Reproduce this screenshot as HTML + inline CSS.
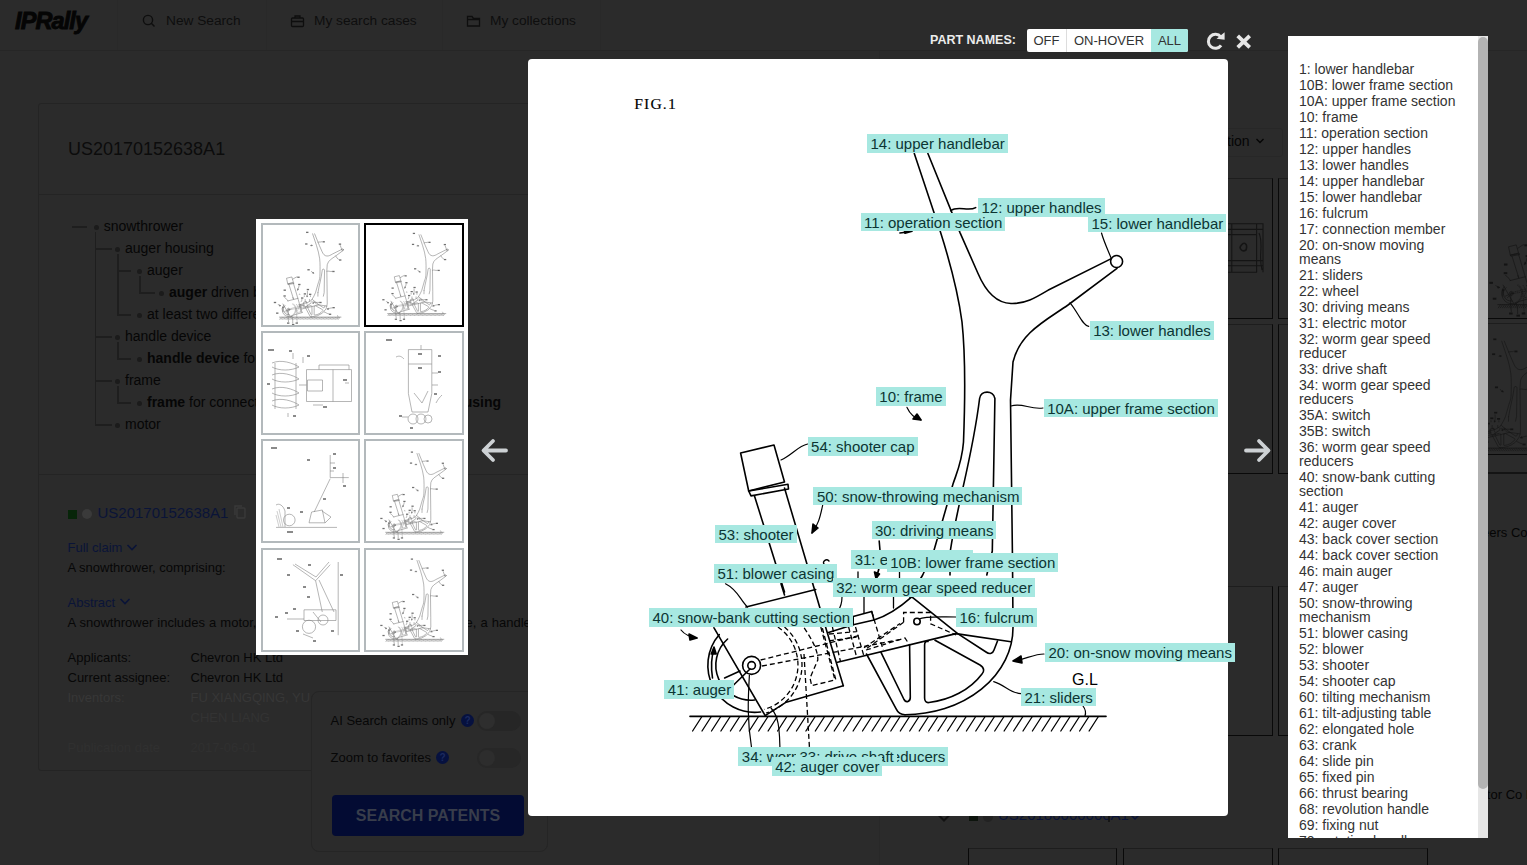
<!DOCTYPE html>
<html><head><meta charset="utf-8">
<style>
*{box-sizing:border-box;margin:0;padding:0}
html,body{width:1527px;height:865px;overflow:hidden;background:#2b2b2b;font-family:"Liberation Sans",sans-serif;position:relative}
.a{position:absolute;white-space:nowrap}
.hdr{left:0;top:0;width:1527px;height:51px;border-bottom:1px solid #262626}
.nav{top:0;height:50px;border-left:1px solid #292929}
.nav span{position:absolute;top:13px;line-height:16px;color:#0e0e0e;font-size:13.7px}
.card{left:38px;top:103px;width:830px;height:668px;border:1px solid #242424;border-radius:3px}
.t{position:absolute;color:#060606;font-size:14px;line-height:16px;white-space:nowrap}
.tl{position:absolute;background:#1e1e1e}
.dot{position:absolute;width:5px;height:5px;border-radius:50%;background:#1b1b1b}
.d13{position:absolute;font-size:13px;line-height:16px;color:#070707;white-space:nowrap}
.navy{color:#0a1438}
.fade{color:#262626}
.modal{left:528px;top:59px;width:700px;height:757px;background:#fff;border-radius:4px;overflow:hidden}
.lb{position:absolute;background:#a7e8e1;color:#0c3533;font-size:15px;line-height:18px;height:18.5px;padding:1px 3px 0 3.5px;white-space:nowrap}
.list{left:1288px;top:36px;width:200px;height:802px;background:#fff;overflow:hidden}
.list .in{position:absolute;left:11px;top:26px;width:168px;font-size:14px;line-height:14px;color:#333;white-space:normal}
.list .in p{margin:0 0 2px 0}
.sb{position:absolute;left:190px;top:0;width:10px;height:802px;background:#e6e6e6}
.sbt{position:absolute;left:0;top:1px;width:10px;height:752px;background:#b3b3b3;border-radius:5px}
.thumbs{left:256px;top:219px;width:212px;height:436px;background:#fff}
.th{position:absolute;width:99.5px;height:104px;border:2px solid #b3b9bc;background:#fff;overflow:hidden}
.th.sel{border-color:#000}
.bth{position:absolute;border:1.5px solid #090909;border-top-color:#1d1d1d}
</style></head><body>
<svg width="0" height="0" style="position:absolute"><defs><g id="fig"><g fill="none" stroke="#000" stroke-width="1.6" stroke-linecap="round" stroke-linejoin="round">
<!-- FIG.1 -->
<!-- frame left outer -->
<path d="M914.3 153.5 L940.3 231.6 C950 262 958 292 962 322 C965 350 965.5 390 963.5 442 C962 462 957 472 953 484 L933.8 551 L922.7 575 L909.7 597"/>
<!-- right handle line / upper arm -->
<path d="M927.9 153.5 L960 232.6 L977.8 273 C985 290 995 303 1011 303.5 C1025 304 1035 298 1048.4 290 L1111.3 258.6"/>
<!-- lower arm -->
<path d="M1117 268.4 L1068 305 C1045 321 1020 333 1013 362 L1010.5 400 L1012.5 560 L1013 627.6 A108 87 0 0 1 905 714.7"/>
<!-- handlebar circle -->
<circle cx="1116.6" cy="261.5" r="6"/>
<!-- slot -->
<path d="M950.3 551 C958 500 972 460 979.6 398.5 C980.5 390 993.5 390 994.9 398.5 L992.3 551 L986.8 575"/>
<path d="M950.3 551 L950 575"/>
<!-- leaders -->
<path d="M950.7 210.7 C958 205 968 212 975.7 207.6"/>
<path d="M1101.5 233 C1104 242 1108 250 1111.3 258.6" stroke-width="1.2"/>
<path d="M1070 302.8 C1078 312 1082 325 1088.7 326.4" stroke-width="1.2"/>
<path d="M1011 406 C1022 402 1030 410 1043 408" stroke-width="1.2"/>
<path d="M907 407.4 C910 414 914 418 921 420" stroke-width="1.2"/>
<path d="M921 420 l-8 -1 l4 -5 z" fill="#000"/>
<path d="M899.8 233 l8 -1" stroke-width="1.3"/><path d="M912 231.3 l-8 -2.8 l1 4.8 z" fill="#000"/>
<!-- shooter cap -->
<path d="M740.6 453 L774 445 L784.5 482 L748.7 491 Z"/>
<path d="M748.7 491 L788 484.3 L788.5 489 L751 495.9 Z"/>
<!-- shooter tube -->
<path d="M754.5 496 L784.5 592"/>
<path d="M784.5 488 L825.4 626.4 L843.3 685.7"/>
<!-- blower casing bottom line -->
<path d="M746 607 L815.7 589.5"/>
<path d="M781 583.8 L784.5 595"/>
<path d="M781 460 C792 455 798 446 807.6 444" stroke-width="1.2"/>
<path d="M822.7 505 C820 518 818 525 812 533" stroke-width="1.2"/>
<path d="M812 533 l1 -9 l5 4 z" fill="#000"/>
<path d="M725.5 583.8 C738 590 740 600 747.5 607" stroke-width="1.2"/>
<path d="M824 564 C822 562 826 558 829 561" stroke-width="1.4"/>
<!-- 40 arrow -->
<path d="M681 630 C685 635 690 637 697 638" stroke-width="1.2"/>
<path d="M697 638 l-8 -4 l1 6 z" fill="#000"/>
<!-- auger housing -->
<path d="M714 627.8 L765.2 715.7 L786.2 702.2 L843.3 685.7"/>
<circle cx="751.6" cy="665.4" r="9"/>
<circle cx="751.6" cy="665.4" r="3.8"/>
<path d="M719.3 634.6 A47 47 0 0 0 760.6 712"/>
<path d="M727.6 639 A35 35 0 0 0 754.6 700"/>
<path d="M712.5 678 C711 668 711 658 714 649.6"/>
<path d="M714 647 l-2.8 7 l5 0 z" fill="#000"/>
<path d="M733.6 685 L750 669"/>
<path d="M724.6 678 L740 671"/>
<path d="M749.4 675 C748 700 747 720 751.6 748" stroke-width="1.2"/>
<path d="M771 708 C778 716 780 725 780 757" stroke-width="1.2"/>
<!-- tube upper & worm box -->
<path d="M853.2 624.7 L853.2 616.6 L871.7 611.4 L874 620"/>
<path d="M827.7 632.8 L853.2 624.7 L874 620 C885 616.5 898 609 911.8 596.8 L957.7 633.6 L986 652 C990 655 993 653 994 650 L997.5 641"/>
<path d="M837.6 662.3 L956 633.6 L1011 641.8"/>
<path d="M864 597 L864 613 M893.5 597 L893.5 608 M858 572 L858 578 M899.5 572 L899.5 578" stroke-width="1.3"/>
<path d="M879.2 541 C881 555 880 568 876.5 577"/><path d="M876 578.5 l-1.5 -6.5 l5 2 z" fill="#000"/>
<path d="M842 597 C842 604 840 608 838 611" stroke-width="1.2"/>
<!-- sled -->
<path d="M866.5 654 L896 708.7 C898 713 901 714.7 905 714.7"/>
<path d="M881 652.4 L904 699.5 C906 703 910.5 702 910.3 697 L909.6 645"/>
<path d="M935 640.3 L980 665 C985 668 984 672 982 674 C970 690 950 700 929 702.5 C926 703 924.6 701 924.6 698 L924.6 645 C924.6 642 926 641 928 641.5"/>

<!-- fulcrum -->
<circle cx="917" cy="621.5" r="3.2"/>
<path d="M919 619 C925 616 940 617 956 617" stroke-width="1.2"/>
<!-- 20 arrow & 21 leader -->
<path d="M1044 654 C1035 654 1028 658 1015 661" stroke-width="1.2"/>
<path d="M1013 661 l8 -5 l1 7 z" fill="#000"/>
<path d="M993.7 681.6 C1005 685 1010 693 1021 693.7" stroke-width="1.2"/>
<path d="M1083 706 C1086 710 1086 713 1085 716" stroke-width="1.2"/>
<!-- ground -->
<path d="M690 716.4 L1106 716.4"/>
<path stroke-width="1.3" d="M701.6 717l-9 14 M711.0 717l-9 14 M720.5 717l-9 14 M729.9 717l-9 14 M739.4 717l-9 14 M748.8 717l-9 14 M758.2 717l-9 14 M767.7 717l-9 14 M777.1 717l-9 14 M786.6 717l-9 14 M796.0 717l-9 14 M805.4 717l-9 14 M814.9 717l-9 14 M824.3 717l-9 14 M833.8 717l-9 14 M843.2 717l-9 14 M852.6 717l-9 14 M862.1 717l-9 14 M871.5 717l-9 14 M881.0 717l-9 14 M890.4 717l-9 14 M899.8 717l-9 14 M909.3 717l-9 14 M918.7 717l-9 14 M928.2 717l-9 14 M937.6 717l-9 14 M947.0 717l-9 14 M956.5 717l-9 14 M965.9 717l-9 14 M975.4 717l-9 14 M984.8 717l-9 14 M994.2 717l-9 14 M1003.7 717l-9 14 M1013.1 717l-9 14 M1022.6 717l-9 14 M1032.0 717l-9 14 M1041.4 717l-9 14 M1050.9 717l-9 14 M1060.3 717l-9 14 M1069.8 717l-9 14 M1079.2 717l-9 14 M1088.6 717l-9 14 M1098.1 717l-9 14"/>
</g>
<g fill="none" stroke="#000" stroke-width="1.3" stroke-dasharray="5 3">
<path d="M784.5 627 A50 50 0 0 1 766 713"/>
<path d="M777.9 627 A46 46 0 0 1 764 709.4"/>
<path d="M760.6 660 L860 635.3"/>
<path d="M762 666 L899.4 639.7"/>
<path d="M804.2 627.8 C812 640 818 650 817.8 660 L810 678 L811.7 685.7 L835.8 679.7 L822.3 627.8"/>
<path d="M804 654 L810 757"/>
<path d="M903.6 622.3 L903.6 612.5 L930.6 612.5 L930.6 623.8 L956 635"/>
<path d="M903.6 622.3 L864.5 650 M866 650 L905 638 L909.6 645 M871.7 611.4 L883.2 650"/>
<path d="M864 647.8 L900 623.5"/>
<path d="M820.8 627 L834.7 679 M832.4 627 L840.5 661.7 M848.6 627 L856.6 657 M855.5 627 L863.6 655 M829 634 L856.6 631.6 M829 640.9 L856.6 637"/>
</g>
<text x="634.3" y="109.4" font-family="Liberation Serif" font-size="15.6" style="letter-spacing:1.15px" fill="#000" stroke="#000" stroke-width="0.15">FIG.1</text>
<text x="1072" y="685" font-family="Liberation Sans" font-size="16" fill="#000" stroke="none">G.L</text>
</g></defs></svg>
<!-- header -->
<div class="a hdr"></div>
<div class="a" style="left:15px;top:7.3px;font-size:23.5px;line-height:28px;font-weight:700;font-style:italic;color:#050505;letter-spacing:-0.9px;-webkit-text-stroke:0.9px #050505">IPRally</div>
<div class="a nav" style="left:117px;width:150px"><span style="left:48px">New Search</span>
<svg style="position:absolute;left:24px;top:14px" width="14" height="14" viewBox="0 0 14 14"><circle cx="6" cy="6" r="4.6" fill="none" stroke="#0e0e0e" stroke-width="1.4"/><path d="M9.3 9.3 L12.5 12.5" stroke="#0e0e0e" stroke-width="1.5"/></svg></div>
<div class="a nav" style="left:266px;width:176px"><span style="left:47px">My search cases</span>
<svg style="position:absolute;left:23px;top:14px" width="15" height="14" viewBox="0 0 15 14"><rect x="1.5" y="4" width="12" height="8.5" rx="1" fill="none" stroke="#0e0e0e" stroke-width="1.3"/><path d="M5 4 V2 H10 V4 M1.5 7.5 H13.5" fill="none" stroke="#0e0e0e" stroke-width="1.3"/></svg></div>
<div class="a nav" style="left:442px;width:159px"><span style="left:47px">My collections</span>
<svg style="position:absolute;left:23px;top:14px" width="15" height="14" viewBox="0 0 15 14"><path d="M1.5 2.5 H6 L7.5 4.5 H13.5 V12 H1.5 Z M1.5 5.5 H13.5" fill="none" stroke="#0e0e0e" stroke-width="1.3"/></svg></div>
<div class="a nav" style="left:600px;width:1px"></div>

<!-- left card -->
<div class="a card"></div>
<div class="a" style="left:39px;top:194px;width:828px;height:1px;background:#242424"></div>
<div class="a" style="left:39px;top:474px;width:828px;height:1px;background:#242424"></div>
<div class="a" style="left:68px;top:139px;font-size:18px;line-height:20px;color:#0c0c0c">US20170152638A1</div>
<div class="t" style="left:103.7px;top:217.85px">snowthrower</div>
<div class="dot" style="left:93.7px;top:224.7px"></div>
<div class="t" style="left:125px;top:239.85px">auger housing</div>
<div class="dot" style="left:115.0px;top:246.7px"></div>
<div class="t" style="left:147px;top:261.85px">auger</div>
<div class="dot" style="left:137.0px;top:268.7px"></div>
<div class="t" style="left:169px;top:283.85px"><b>auger</b> driven by the motor</div>
<div class="dot" style="left:159.0px;top:290.7px"></div>
<div class="t" style="left:147px;top:305.85px">at least two different speeds</div>
<div class="dot" style="left:137.0px;top:312.7px"></div>
<div class="t" style="left:125px;top:327.85px">handle device</div>
<div class="dot" style="left:115.0px;top:334.7px"></div>
<div class="t" style="left:147px;top:349.85px"><b>handle device</b> for operating</div>
<div class="dot" style="left:137.0px;top:356.7px"></div>
<div class="t" style="left:125px;top:371.85px">frame</div>
<div class="dot" style="left:115.0px;top:378.7px"></div>
<div class="t" style="left:147px;top:393.85px"><b>frame</b> for connecting <b>handle device</b> and <b>auger housing</b></div>
<div class="dot" style="left:137.0px;top:400.7px"></div>
<div class="t" style="left:125px;top:415.85px">motor</div>
<div class="dot" style="left:115.0px;top:422.7px"></div>
<div class="tl" style="left:72.2px;top:226.45px;width:15.299999999999997px;height:1.5px"></div>
<div class="tl" style="left:94.75px;top:232px;width:1.5px;height:193.95px"></div>
<div class="tl" style="left:95.5px;top:248.45px;width:16.299999999999997px;height:1.5px"></div>
<div class="tl" style="left:95.5px;top:336.45px;width:16.299999999999997px;height:1.5px"></div>
<div class="tl" style="left:95.5px;top:380.45px;width:16.299999999999997px;height:1.5px"></div>
<div class="tl" style="left:95.5px;top:424.45px;width:16.299999999999997px;height:1.5px"></div>
<div class="tl" style="left:117.25px;top:254px;width:1.5px;height:61.95px"></div>
<div class="tl" style="left:118px;top:270.45px;width:13px;height:1.5px"></div>
<div class="tl" style="left:118px;top:314.45px;width:13px;height:1.5px"></div>
<div class="tl" style="left:139.45px;top:276px;width:1.5px;height:17.95px"></div>
<div class="tl" style="left:140.2px;top:292.45px;width:14.600000000000023px;height:1.5px"></div>
<div class="tl" style="left:117.25px;top:342px;width:1.5px;height:17.95px"></div>
<div class="tl" style="left:118px;top:358.45px;width:13px;height:1.5px"></div>
<div class="tl" style="left:117.25px;top:386px;width:1.5px;height:17.95px"></div>
<div class="tl" style="left:118px;top:402.45px;width:13px;height:1.5px"></div>
<!-- details -->
<div class="a" style="left:67.5px;top:509.5px;width:9px;height:9px;background:#072509"></div>
<div class="a" style="left:82px;top:509px;width:10px;height:10px;border-radius:50%;background:#3a3a3a"></div>
<div class="d13 navy" style="left:97.5px;top:503.5px;font-size:15px;line-height:18px">US20170152638A1</div>
<svg class="a" style="left:232px;top:504px" width="16" height="16" viewBox="0 0 16 16"><rect x="5" y="4" width="8" height="10" rx="1" fill="none" stroke="#3a3a3a" stroke-width="1.4"/><path d="M3 11 V2 H10" fill="none" stroke="#3a3a3a" stroke-width="1.4"/></svg>
<div class="d13 navy" style="left:67.5px;top:540px">Full claim</div>
<svg class="a" style="left:126px;top:543px" width="12" height="9" viewBox="0 0 12 9"><path d="M1.5 2 L6 6.5 L10.5 2" fill="none" stroke="#0a1438" stroke-width="1.6"/></svg>
<div class="d13" style="left:67.5px;top:559.5px">A snowthrower, comprising:</div>
<div class="d13 navy" style="left:67.5px;top:594.5px">Abstract</div>
<svg class="a" style="left:119px;top:597px" width="12" height="9" viewBox="0 0 12 9"><path d="M1.5 2 L6 6.5 L10.5 2" fill="none" stroke="#0a1438" stroke-width="1.6"/></svg>
<div class="d13" style="left:67.5px;top:614.5px;word-spacing:0.45px">A snowthrower includes a motor, an auger housing, an auger, a frame, a handle</div>
<div class="d13" style="left:67.5px;top:650px">Applicants:</div>
<div class="d13" style="left:190.5px;top:650px">Chevron HK Ltd</div>
<div class="d13" style="left:67.5px;top:670px">Current assignee:</div>
<div class="d13" style="left:190.5px;top:670px">Chevron HK Ltd</div>
<div class="d13 fade" style="left:67.5px;top:690px;color:#373737">Inventors:</div>
<div class="d13 fade" style="left:190.5px;top:690px;color:#373737">FU XIANGQING, YU XIANGQING,</div>
<div class="d13 fade" style="left:190.5px;top:709.5px;color:#333">CHEN LIANG</div>
<div class="d13 fade" style="left:67.5px;top:739.5px;color:#303030">Publication date</div>
<div class="d13 fade" style="left:190.5px;top:739.5px;color:#303030">2017-06-01</div>

<!-- search panel -->
<div class="a" style="left:310.5px;top:691px;width:237px;height:161px;border:1px solid #252525;border-radius:8px;background:#2b2b2b"></div>
<div class="d13" style="left:330.5px;top:712.5px">AI Search claims only</div>
<div class="a" style="left:461px;top:714px;width:13px;height:13px;border-radius:50%;background:#06113f;color:#1c2a5e;font-size:10px;line-height:13px;text-align:center;font-weight:700">?</div>
<div class="a" style="left:477px;top:711px;width:44px;height:20px;border-radius:10px;background:#262626"></div>
<div class="a" style="left:479px;top:713px;width:16px;height:16px;border-radius:50%;background:#2e2e2e"></div>
<div class="d13" style="left:330.5px;top:749.5px">Zoom to favorites</div>
<div class="a" style="left:436px;top:751px;width:13px;height:13px;border-radius:50%;background:#06113f;color:#1c2a5e;font-size:10px;line-height:13px;text-align:center;font-weight:700">?</div>
<div class="a" style="left:477px;top:748px;width:44px;height:20px;border-radius:10px;background:#272727"></div>
<div class="a" style="left:479px;top:750px;width:16px;height:16px;border-radius:50%;background:#2d2d2d"></div>
<div class="a" style="left:332px;top:795px;width:192px;height:41px;border-radius:4px;background:#030b33;color:#383d4b;font-size:16px;font-weight:700;line-height:41px;text-align:center">SEARCH PATENTS</div>

<!-- background right side -->
<div class="a" style="left:879px;top:51px;width:1px;height:814px;background:#282828"></div>
<div class="a" style="left:1130px;top:127.5px;width:153px;height:29.5px;border:1px solid #272727;border-radius:3px"></div>
<div class="a" style="left:1150px;top:132.5px;width:99.6px;text-align:right;font-size:14px;line-height:16px;color:#050505">Selection</div>
<svg class="a" style="left:1255px;top:136.5px" width="10" height="8" viewBox="0 0 10 8"><path d="M1.5 2 L5 5.5 L8.5 2" fill="none" stroke="#050505" stroke-width="1.4"/></svg>
<div class="bth" style="left:968px;top:178px;width:149px;height:141px"></div>
<div class="bth" style="left:1123px;top:178px;width:150px;height:141px"></div>
<div class="bth" style="left:1278px;top:178px;width:150px;height:141px"></div>
<div class="bth" style="left:1433px;top:120px;width:150px;height:199px;overflow:hidden;border-top:none"><svg style="position:absolute;left:0;top:0" width="150" height="200"><g transform="translate(-88 27) scale(0.22)" stroke-width="3"><g stroke="#141414" color="#141414"><g fill="none" stroke-linecap="round" stroke-linejoin="round">
<!-- FIG.1 -->
<!-- frame left outer -->
<path d="M914.3 153.5 L940.3 231.6 C950 262 958 292 962 322 C965 350 965.5 390 963.5 442 C962 462 957 472 953 484 L933.8 551 L922.7 575 L909.7 597"/>
<!-- right handle line / upper arm -->
<path d="M927.9 153.5 L960 232.6 L977.8 273 C985 290 995 303 1011 303.5 C1025 304 1035 298 1048.4 290 L1111.3 258.6"/>
<!-- lower arm -->
<path d="M1117 268.4 L1068 305 C1045 321 1020 333 1013 362 L1010.5 400 L1012.5 560 L1013 627.6 A108 87 0 0 1 905 714.7"/>
<!-- handlebar circle -->
<circle cx="1116.6" cy="261.5" r="6"/>
<!-- slot -->
<path d="M950.3 551 C958 500 972 460 979.6 398.5 C980.5 390 993.5 390 994.9 398.5 L992.3 551 L986.8 575"/>
<path d="M950.3 551 L950 575"/>
<!-- leaders -->
<path d="M950.7 210.7 C958 205 968 212 975.7 207.6"/>
<path d="M1101.5 233 C1104 242 1108 250 1111.3 258.6"/>
<path d="M1070 302.8 C1078 312 1082 325 1088.7 326.4"/>
<path d="M1011 406 C1022 402 1030 410 1043 408"/>
<path d="M907 407.4 C910 414 914 418 921 420"/>
<path d="M921 420 l-8 -1 l4 -5 z" fill="currentColor"/>
<path d="M899.8 233 l8 -1"/><path d="M912 231.3 l-8 -2.8 l1 4.8 z" fill="currentColor"/>
<!-- shooter cap -->
<path d="M740.6 453 L774 445 L784.5 482 L748.7 491 Z"/>
<path d="M748.7 491 L788 484.3 L788.5 489 L751 495.9 Z"/>
<!-- shooter tube -->
<path d="M754.5 496 L784.5 592"/>
<path d="M784.5 488 L825.4 626.4 L843.3 685.7"/>
<!-- blower casing bottom line -->
<path d="M746 607 L815.7 589.5"/>
<path d="M781 583.8 L784.5 595"/>
<path d="M781 460 C792 455 798 446 807.6 444"/>
<path d="M822.7 505 C820 518 818 525 812 533"/>
<path d="M812 533 l1 -9 l5 4 z" fill="currentColor"/>
<path d="M725.5 583.8 C738 590 740 600 747.5 607"/>
<path d="M824 564 C822 562 826 558 829 561"/>
<!-- 40 arrow -->
<path d="M681 630 C685 635 690 637 697 638"/>
<path d="M697 638 l-8 -4 l1 6 z" fill="currentColor"/>
<!-- auger housing -->
<path d="M714 627.8 L765.2 715.7 L786.2 702.2 L843.3 685.7"/>
<circle cx="751.6" cy="665.4" r="9"/>
<circle cx="751.6" cy="665.4" r="3.8"/>
<path d="M719.3 634.6 A47 47 0 0 0 760.6 712"/>
<path d="M727.6 639 A35 35 0 0 0 754.6 700"/>
<path d="M712.5 678 C711 668 711 658 714 649.6"/>
<path d="M714 647 l-2.8 7 l5 0 z" fill="currentColor"/>
<path d="M733.6 685 L750 669"/>
<path d="M724.6 678 L740 671"/>
<path d="M749.4 675 C748 700 747 720 751.6 748"/>
<path d="M771 708 C778 716 780 725 780 757"/>
<!-- tube upper & worm box -->
<path d="M853.2 624.7 L853.2 616.6 L871.7 611.4 L874 620"/>
<path d="M827.7 632.8 L853.2 624.7 L874 620 C885 616.5 898 609 911.8 596.8 L957.7 633.6 L986 652 C990 655 993 653 994 650 L997.5 641"/>
<path d="M837.6 662.3 L956 633.6 L1011 641.8"/>
<path d="M864 597 L864 613 M893.5 597 L893.5 608 M858 572 L858 578 M899.5 572 L899.5 578"/>
<path d="M879.2 541 C881 555 880 568 876.5 577"/><path d="M876 578.5 l-1.5 -6.5 l5 2 z" fill="currentColor"/>
<path d="M842 597 C842 604 840 608 838 611"/>
<!-- sled -->
<path d="M866.5 654 L896 708.7 C898 713 901 714.7 905 714.7"/>
<path d="M881 652.4 L904 699.5 C906 703 910.5 702 910.3 697 L909.6 645"/>
<path d="M935 640.3 L980 665 C985 668 984 672 982 674 C970 690 950 700 929 702.5 C926 703 924.6 701 924.6 698 L924.6 645 C924.6 642 926 641 928 641.5"/>

<!-- fulcrum -->
<circle cx="917" cy="621.5" r="3.2"/>
<path d="M919 619 C925 616 940 617 956 617"/>
<!-- 20 arrow & 21 leader -->
<path d="M1044 654 C1035 654 1028 658 1015 661"/>
<path d="M1013 661 l8 -5 l1 7 z" fill="currentColor"/>
<path d="M993.7 681.6 C1005 685 1010 693 1021 693.7"/>
<path d="M1083 706 C1086 710 1086 713 1085 716"/>
<!-- ground -->
<path d="M690 716.4 L1106 716.4"/>
<path d="M701.6 717l-9 14 M711.0 717l-9 14 M720.5 717l-9 14 M729.9 717l-9 14 M739.4 717l-9 14 M748.8 717l-9 14 M758.2 717l-9 14 M767.7 717l-9 14 M777.1 717l-9 14 M786.6 717l-9 14 M796.0 717l-9 14 M805.4 717l-9 14 M814.9 717l-9 14 M824.3 717l-9 14 M833.8 717l-9 14 M843.2 717l-9 14 M852.6 717l-9 14 M862.1 717l-9 14 M871.5 717l-9 14 M881.0 717l-9 14 M890.4 717l-9 14 M899.8 717l-9 14 M909.3 717l-9 14 M918.7 717l-9 14 M928.2 717l-9 14 M937.6 717l-9 14 M947.0 717l-9 14 M956.5 717l-9 14 M965.9 717l-9 14 M975.4 717l-9 14 M984.8 717l-9 14 M994.2 717l-9 14 M1003.7 717l-9 14 M1013.1 717l-9 14 M1022.6 717l-9 14 M1032.0 717l-9 14 M1041.4 717l-9 14 M1050.9 717l-9 14 M1060.3 717l-9 14 M1069.8 717l-9 14 M1079.2 717l-9 14 M1088.6 717l-9 14 M1098.1 717l-9 14"/>
</g>
<g fill="none" stroke-dasharray="5 3">
<path d="M784.5 627 A50 50 0 0 1 766 713"/>
<path d="M777.9 627 A46 46 0 0 1 764 709.4"/>
<path d="M760.6 660 L860 635.3"/>
<path d="M762 666 L899.4 639.7"/>
<path d="M804.2 627.8 C812 640 818 650 817.8 660 L810 678 L811.7 685.7 L835.8 679.7 L822.3 627.8"/>
<path d="M804 654 L810 757"/>
<path d="M903.6 622.3 L903.6 612.5 L930.6 612.5 L930.6 623.8 L956 635"/>
<path d="M903.6 622.3 L864.5 650 M866 650 L905 638 L909.6 645 M871.7 611.4 L883.2 650"/>
<path d="M864 647.8 L900 623.5"/>
<path d="M820.8 627 L834.7 679 M832.4 627 L840.5 661.7 M848.6 627 L856.6 657 M855.5 627 L863.6 655 M829 634 L856.6 631.6 M829 640.9 L856.6 637"/>
</g>
<text display="none" x="634.3" y="109.4" font-family="Liberation Serif" font-size="15.6" style="letter-spacing:1.15px" fill="currentColor">FIG.1</text>
<text display="none" x="1072" y="685" font-family="Liberation Sans" font-size="16" fill="currentColor" stroke="none">G.L</text>
<rect x="870.0" y="139.2" width="16" height="9" stroke="none" fill="currentColor"/><rect x="981.0" y="203.0" width="16" height="9" stroke="none" fill="currentColor"/><rect x="863.6" y="217.7" width="16" height="9" stroke="none" fill="currentColor"/><rect x="1091.0" y="218.8" width="16" height="9" stroke="none" fill="currentColor"/><rect x="1092.7" y="326.0" width="16" height="9" stroke="none" fill="currentColor"/><rect x="878.8" y="392.0" width="16" height="9" stroke="none" fill="currentColor"/><rect x="1046.7" y="403.5" width="16" height="9" stroke="none" fill="currentColor"/><rect x="810.6" y="442.4" width="16" height="9" stroke="none" fill="currentColor"/><rect x="816.4" y="491.5" width="16" height="9" stroke="none" fill="currentColor"/><rect x="718.0" y="529.8" width="16" height="9" stroke="none" fill="currentColor"/><rect x="874.5" y="525.5" width="16" height="9" stroke="none" fill="currentColor"/><rect x="854.2" y="555.0" width="16" height="9" stroke="none" fill="currentColor"/><rect x="889.7" y="558.0" width="16" height="9" stroke="none" fill="currentColor"/><rect x="717.0" y="569.0" width="16" height="9" stroke="none" fill="currentColor"/><rect x="835.7" y="583.0" width="16" height="9" stroke="none" fill="currentColor"/><rect x="652.0" y="613.0" width="16" height="9" stroke="none" fill="currentColor"/><rect x="959.0" y="613.0" width="16" height="9" stroke="none" fill="currentColor"/><rect x="1048.0" y="648.0" width="16" height="9" stroke="none" fill="currentColor"/><rect x="667.3" y="685.0" width="16" height="9" stroke="none" fill="currentColor"/><rect x="1024.0" y="692.6" width="16" height="9" stroke="none" fill="currentColor"/><rect x="741.3" y="752.3" width="16" height="9" stroke="none" fill="currentColor"/><rect x="799.0" y="752.3" width="16" height="9" stroke="none" fill="currentColor"/><rect x="774.7" y="762.0" width="16" height="9" stroke="none" fill="currentColor"/></g></g></svg></div>
<svg class="a" style="left:1228px;top:215px" width="45" height="65" viewBox="1228 215 45 65"><g fill="none" stroke="#141414" stroke-width="1.1"><path d="M1228 223.7 H1263.5 M1228 229.4 H1263.5 M1228 234.6 H1257 M1228 260.6 H1263.5 M1228 265.8 H1263.5 M1228 272.2 H1257 M1231.8 223.7 V272.2 M1256.6 223.7 V272.2 M1263 223.7 V272.2 M1259 233 C1264 245 1258 255 1262 270"/><path d="M1240 247 C1244 240 1248 244 1246 250 C1243 252 1240 250 1240 247" stroke-width="1.6"/></g></svg>
<div class="bth" style="left:968px;top:324px;width:149px;height:150px"></div>
<div class="bth" style="left:1123px;top:324px;width:150px;height:150px"></div>
<div class="bth" style="left:1278px;top:324px;width:150px;height:150px"></div>
<div class="bth" style="left:1433px;top:323px;width:150px;height:132px;overflow:hidden"><svg style="position:absolute;left:0;top:0" width="150" height="140"><g transform="translate(-106 -12) scale(0.19)" stroke-width="3"><g stroke="#141414" color="#141414"><g fill="none" stroke-linecap="round" stroke-linejoin="round">
<!-- FIG.1 -->
<!-- frame left outer -->
<path d="M914.3 153.5 L940.3 231.6 C950 262 958 292 962 322 C965 350 965.5 390 963.5 442 C962 462 957 472 953 484 L933.8 551 L922.7 575 L909.7 597"/>
<!-- right handle line / upper arm -->
<path d="M927.9 153.5 L960 232.6 L977.8 273 C985 290 995 303 1011 303.5 C1025 304 1035 298 1048.4 290 L1111.3 258.6"/>
<!-- lower arm -->
<path d="M1117 268.4 L1068 305 C1045 321 1020 333 1013 362 L1010.5 400 L1012.5 560 L1013 627.6 A108 87 0 0 1 905 714.7"/>
<!-- handlebar circle -->
<circle cx="1116.6" cy="261.5" r="6"/>
<!-- slot -->
<path d="M950.3 551 C958 500 972 460 979.6 398.5 C980.5 390 993.5 390 994.9 398.5 L992.3 551 L986.8 575"/>
<path d="M950.3 551 L950 575"/>
<!-- leaders -->
<path d="M950.7 210.7 C958 205 968 212 975.7 207.6"/>
<path d="M1101.5 233 C1104 242 1108 250 1111.3 258.6"/>
<path d="M1070 302.8 C1078 312 1082 325 1088.7 326.4"/>
<path d="M1011 406 C1022 402 1030 410 1043 408"/>
<path d="M907 407.4 C910 414 914 418 921 420"/>
<path d="M921 420 l-8 -1 l4 -5 z" fill="currentColor"/>
<path d="M899.8 233 l8 -1"/><path d="M912 231.3 l-8 -2.8 l1 4.8 z" fill="currentColor"/>
<!-- shooter cap -->
<path d="M740.6 453 L774 445 L784.5 482 L748.7 491 Z"/>
<path d="M748.7 491 L788 484.3 L788.5 489 L751 495.9 Z"/>
<!-- shooter tube -->
<path d="M754.5 496 L784.5 592"/>
<path d="M784.5 488 L825.4 626.4 L843.3 685.7"/>
<!-- blower casing bottom line -->
<path d="M746 607 L815.7 589.5"/>
<path d="M781 583.8 L784.5 595"/>
<path d="M781 460 C792 455 798 446 807.6 444"/>
<path d="M822.7 505 C820 518 818 525 812 533"/>
<path d="M812 533 l1 -9 l5 4 z" fill="currentColor"/>
<path d="M725.5 583.8 C738 590 740 600 747.5 607"/>
<path d="M824 564 C822 562 826 558 829 561"/>
<!-- 40 arrow -->
<path d="M681 630 C685 635 690 637 697 638"/>
<path d="M697 638 l-8 -4 l1 6 z" fill="currentColor"/>
<!-- auger housing -->
<path d="M714 627.8 L765.2 715.7 L786.2 702.2 L843.3 685.7"/>
<circle cx="751.6" cy="665.4" r="9"/>
<circle cx="751.6" cy="665.4" r="3.8"/>
<path d="M719.3 634.6 A47 47 0 0 0 760.6 712"/>
<path d="M727.6 639 A35 35 0 0 0 754.6 700"/>
<path d="M712.5 678 C711 668 711 658 714 649.6"/>
<path d="M714 647 l-2.8 7 l5 0 z" fill="currentColor"/>
<path d="M733.6 685 L750 669"/>
<path d="M724.6 678 L740 671"/>
<path d="M749.4 675 C748 700 747 720 751.6 748"/>
<path d="M771 708 C778 716 780 725 780 757"/>
<!-- tube upper & worm box -->
<path d="M853.2 624.7 L853.2 616.6 L871.7 611.4 L874 620"/>
<path d="M827.7 632.8 L853.2 624.7 L874 620 C885 616.5 898 609 911.8 596.8 L957.7 633.6 L986 652 C990 655 993 653 994 650 L997.5 641"/>
<path d="M837.6 662.3 L956 633.6 L1011 641.8"/>
<path d="M864 597 L864 613 M893.5 597 L893.5 608 M858 572 L858 578 M899.5 572 L899.5 578"/>
<path d="M879.2 541 C881 555 880 568 876.5 577"/><path d="M876 578.5 l-1.5 -6.5 l5 2 z" fill="currentColor"/>
<path d="M842 597 C842 604 840 608 838 611"/>
<!-- sled -->
<path d="M866.5 654 L896 708.7 C898 713 901 714.7 905 714.7"/>
<path d="M881 652.4 L904 699.5 C906 703 910.5 702 910.3 697 L909.6 645"/>
<path d="M935 640.3 L980 665 C985 668 984 672 982 674 C970 690 950 700 929 702.5 C926 703 924.6 701 924.6 698 L924.6 645 C924.6 642 926 641 928 641.5"/>

<!-- fulcrum -->
<circle cx="917" cy="621.5" r="3.2"/>
<path d="M919 619 C925 616 940 617 956 617"/>
<!-- 20 arrow & 21 leader -->
<path d="M1044 654 C1035 654 1028 658 1015 661"/>
<path d="M1013 661 l8 -5 l1 7 z" fill="currentColor"/>
<path d="M993.7 681.6 C1005 685 1010 693 1021 693.7"/>
<path d="M1083 706 C1086 710 1086 713 1085 716"/>
<!-- ground -->
<path d="M690 716.4 L1106 716.4"/>
<path d="M701.6 717l-9 14 M711.0 717l-9 14 M720.5 717l-9 14 M729.9 717l-9 14 M739.4 717l-9 14 M748.8 717l-9 14 M758.2 717l-9 14 M767.7 717l-9 14 M777.1 717l-9 14 M786.6 717l-9 14 M796.0 717l-9 14 M805.4 717l-9 14 M814.9 717l-9 14 M824.3 717l-9 14 M833.8 717l-9 14 M843.2 717l-9 14 M852.6 717l-9 14 M862.1 717l-9 14 M871.5 717l-9 14 M881.0 717l-9 14 M890.4 717l-9 14 M899.8 717l-9 14 M909.3 717l-9 14 M918.7 717l-9 14 M928.2 717l-9 14 M937.6 717l-9 14 M947.0 717l-9 14 M956.5 717l-9 14 M965.9 717l-9 14 M975.4 717l-9 14 M984.8 717l-9 14 M994.2 717l-9 14 M1003.7 717l-9 14 M1013.1 717l-9 14 M1022.6 717l-9 14 M1032.0 717l-9 14 M1041.4 717l-9 14 M1050.9 717l-9 14 M1060.3 717l-9 14 M1069.8 717l-9 14 M1079.2 717l-9 14 M1088.6 717l-9 14 M1098.1 717l-9 14"/>
</g>
<g fill="none" stroke-dasharray="5 3">
<path d="M784.5 627 A50 50 0 0 1 766 713"/>
<path d="M777.9 627 A46 46 0 0 1 764 709.4"/>
<path d="M760.6 660 L860 635.3"/>
<path d="M762 666 L899.4 639.7"/>
<path d="M804.2 627.8 C812 640 818 650 817.8 660 L810 678 L811.7 685.7 L835.8 679.7 L822.3 627.8"/>
<path d="M804 654 L810 757"/>
<path d="M903.6 622.3 L903.6 612.5 L930.6 612.5 L930.6 623.8 L956 635"/>
<path d="M903.6 622.3 L864.5 650 M866 650 L905 638 L909.6 645 M871.7 611.4 L883.2 650"/>
<path d="M864 647.8 L900 623.5"/>
<path d="M820.8 627 L834.7 679 M832.4 627 L840.5 661.7 M848.6 627 L856.6 657 M855.5 627 L863.6 655 M829 634 L856.6 631.6 M829 640.9 L856.6 637"/>
</g>
<text display="none" x="634.3" y="109.4" font-family="Liberation Serif" font-size="15.6" style="letter-spacing:1.15px" fill="currentColor">FIG.1</text>
<text display="none" x="1072" y="685" font-family="Liberation Sans" font-size="16" fill="currentColor" stroke="none">G.L</text>
<rect x="870.0" y="139.2" width="16" height="9" stroke="none" fill="currentColor"/><rect x="981.0" y="203.0" width="16" height="9" stroke="none" fill="currentColor"/><rect x="863.6" y="217.7" width="16" height="9" stroke="none" fill="currentColor"/><rect x="1091.0" y="218.8" width="16" height="9" stroke="none" fill="currentColor"/><rect x="1092.7" y="326.0" width="16" height="9" stroke="none" fill="currentColor"/><rect x="878.8" y="392.0" width="16" height="9" stroke="none" fill="currentColor"/><rect x="1046.7" y="403.5" width="16" height="9" stroke="none" fill="currentColor"/><rect x="810.6" y="442.4" width="16" height="9" stroke="none" fill="currentColor"/><rect x="816.4" y="491.5" width="16" height="9" stroke="none" fill="currentColor"/><rect x="718.0" y="529.8" width="16" height="9" stroke="none" fill="currentColor"/><rect x="874.5" y="525.5" width="16" height="9" stroke="none" fill="currentColor"/><rect x="854.2" y="555.0" width="16" height="9" stroke="none" fill="currentColor"/><rect x="889.7" y="558.0" width="16" height="9" stroke="none" fill="currentColor"/><rect x="717.0" y="569.0" width="16" height="9" stroke="none" fill="currentColor"/><rect x="835.7" y="583.0" width="16" height="9" stroke="none" fill="currentColor"/><rect x="652.0" y="613.0" width="16" height="9" stroke="none" fill="currentColor"/><rect x="959.0" y="613.0" width="16" height="9" stroke="none" fill="currentColor"/><rect x="1048.0" y="648.0" width="16" height="9" stroke="none" fill="currentColor"/><rect x="667.3" y="685.0" width="16" height="9" stroke="none" fill="currentColor"/><rect x="1024.0" y="692.6" width="16" height="9" stroke="none" fill="currentColor"/><rect x="741.3" y="752.3" width="16" height="9" stroke="none" fill="currentColor"/><rect x="799.0" y="752.3" width="16" height="9" stroke="none" fill="currentColor"/><rect x="774.7" y="762.0" width="16" height="9" stroke="none" fill="currentColor"/></g></g></svg></div><div class="a" style="left:1433px;top:472px;width:94px;height:1.5px;background:#141414"></div>
<div class="a" style="left:1448.8px;top:524.5px;font-size:13px;line-height:16px;color:#050505">Engineers Co Ltd</div>
<div class="bth" style="left:968px;top:586px;width:149px;height:150px"></div>
<div class="bth" style="left:1123px;top:586px;width:150px;height:150px"></div>
<div class="bth" style="left:1278px;top:586px;width:150px;height:150px"></div>
<div class="a" style="left:1468.8px;top:786.5px;font-size:13px;line-height:16px;color:#050505">Motor Co Ltd</div>
<div class="bth" style="left:968px;top:848px;width:149px;height:50px"></div>
<div class="bth" style="left:1123px;top:848px;width:150px;height:50px"></div>
<div class="bth" style="left:1278px;top:848px;width:150px;height:50px"></div>
<div class="a" style="left:968.5px;top:812px;width:9px;height:9px;background:#0d140d"></div>
<div class="a" style="left:983px;top:811.5px;width:10px;height:10px;border-radius:50%;background:#222"></div>
<div class="a" style="left:998px;top:806px;font-size:15px;line-height:18px;color:#0a1438">US20180000000A1</div><svg class="a" style="left:936px;top:810px" width="16" height="14" viewBox="0 0 16 14"><path d="M1.5 4 L8 10.5 L14.5 4" fill="none" stroke="#121212" stroke-width="2"/></svg><div class="a" style="left:1108px;top:810px;width:1.5px;height:12px;background:#151515"></div><svg class="a" style="left:1128px;top:812px" width="14" height="10" viewBox="0 0 14 10"><path d="M2 2 L7 7 L12 2" fill="none" stroke="#0a1438" stroke-width="1.5"/></svg>

<!-- thumbs -->
<div class="a thumbs"></div>
<div class="th" style="left:260.6px;top:223.3px"><svg style="position:absolute;left:0;top:0" width="96" height="100"><g transform="translate(-85.7 -13.9) scale(0.148)" stroke-width="3.6"><g stroke="#707070" color="#707070"><g fill="none" stroke-linecap="round" stroke-linejoin="round">
<!-- FIG.1 -->
<!-- frame left outer -->
<path d="M914.3 153.5 L940.3 231.6 C950 262 958 292 962 322 C965 350 965.5 390 963.5 442 C962 462 957 472 953 484 L933.8 551 L922.7 575 L909.7 597"/>
<!-- right handle line / upper arm -->
<path d="M927.9 153.5 L960 232.6 L977.8 273 C985 290 995 303 1011 303.5 C1025 304 1035 298 1048.4 290 L1111.3 258.6"/>
<!-- lower arm -->
<path d="M1117 268.4 L1068 305 C1045 321 1020 333 1013 362 L1010.5 400 L1012.5 560 L1013 627.6 A108 87 0 0 1 905 714.7"/>
<!-- handlebar circle -->
<circle cx="1116.6" cy="261.5" r="6"/>
<!-- slot -->
<path d="M950.3 551 C958 500 972 460 979.6 398.5 C980.5 390 993.5 390 994.9 398.5 L992.3 551 L986.8 575"/>
<path d="M950.3 551 L950 575"/>
<!-- leaders -->
<path d="M950.7 210.7 C958 205 968 212 975.7 207.6"/>
<path d="M1101.5 233 C1104 242 1108 250 1111.3 258.6"/>
<path d="M1070 302.8 C1078 312 1082 325 1088.7 326.4"/>
<path d="M1011 406 C1022 402 1030 410 1043 408"/>
<path d="M907 407.4 C910 414 914 418 921 420"/>
<path d="M921 420 l-8 -1 l4 -5 z" fill="currentColor"/>
<path d="M899.8 233 l8 -1"/><path d="M912 231.3 l-8 -2.8 l1 4.8 z" fill="currentColor"/>
<!-- shooter cap -->
<path d="M740.6 453 L774 445 L784.5 482 L748.7 491 Z"/>
<path d="M748.7 491 L788 484.3 L788.5 489 L751 495.9 Z"/>
<!-- shooter tube -->
<path d="M754.5 496 L784.5 592"/>
<path d="M784.5 488 L825.4 626.4 L843.3 685.7"/>
<!-- blower casing bottom line -->
<path d="M746 607 L815.7 589.5"/>
<path d="M781 583.8 L784.5 595"/>
<path d="M781 460 C792 455 798 446 807.6 444"/>
<path d="M822.7 505 C820 518 818 525 812 533"/>
<path d="M812 533 l1 -9 l5 4 z" fill="currentColor"/>
<path d="M725.5 583.8 C738 590 740 600 747.5 607"/>
<path d="M824 564 C822 562 826 558 829 561"/>
<!-- 40 arrow -->
<path d="M681 630 C685 635 690 637 697 638"/>
<path d="M697 638 l-8 -4 l1 6 z" fill="currentColor"/>
<!-- auger housing -->
<path d="M714 627.8 L765.2 715.7 L786.2 702.2 L843.3 685.7"/>
<circle cx="751.6" cy="665.4" r="9"/>
<circle cx="751.6" cy="665.4" r="3.8"/>
<path d="M719.3 634.6 A47 47 0 0 0 760.6 712"/>
<path d="M727.6 639 A35 35 0 0 0 754.6 700"/>
<path d="M712.5 678 C711 668 711 658 714 649.6"/>
<path d="M714 647 l-2.8 7 l5 0 z" fill="currentColor"/>
<path d="M733.6 685 L750 669"/>
<path d="M724.6 678 L740 671"/>
<path d="M749.4 675 C748 700 747 720 751.6 748"/>
<path d="M771 708 C778 716 780 725 780 757"/>
<!-- tube upper & worm box -->
<path d="M853.2 624.7 L853.2 616.6 L871.7 611.4 L874 620"/>
<path d="M827.7 632.8 L853.2 624.7 L874 620 C885 616.5 898 609 911.8 596.8 L957.7 633.6 L986 652 C990 655 993 653 994 650 L997.5 641"/>
<path d="M837.6 662.3 L956 633.6 L1011 641.8"/>
<path d="M864 597 L864 613 M893.5 597 L893.5 608 M858 572 L858 578 M899.5 572 L899.5 578"/>
<path d="M879.2 541 C881 555 880 568 876.5 577"/><path d="M876 578.5 l-1.5 -6.5 l5 2 z" fill="currentColor"/>
<path d="M842 597 C842 604 840 608 838 611"/>
<!-- sled -->
<path d="M866.5 654 L896 708.7 C898 713 901 714.7 905 714.7"/>
<path d="M881 652.4 L904 699.5 C906 703 910.5 702 910.3 697 L909.6 645"/>
<path d="M935 640.3 L980 665 C985 668 984 672 982 674 C970 690 950 700 929 702.5 C926 703 924.6 701 924.6 698 L924.6 645 C924.6 642 926 641 928 641.5"/>

<!-- fulcrum -->
<circle cx="917" cy="621.5" r="3.2"/>
<path d="M919 619 C925 616 940 617 956 617"/>
<!-- 20 arrow & 21 leader -->
<path d="M1044 654 C1035 654 1028 658 1015 661"/>
<path d="M1013 661 l8 -5 l1 7 z" fill="currentColor"/>
<path d="M993.7 681.6 C1005 685 1010 693 1021 693.7"/>
<path d="M1083 706 C1086 710 1086 713 1085 716"/>
<!-- ground -->
<path d="M690 716.4 L1106 716.4"/>
<path d="M701.6 717l-9 14 M711.0 717l-9 14 M720.5 717l-9 14 M729.9 717l-9 14 M739.4 717l-9 14 M748.8 717l-9 14 M758.2 717l-9 14 M767.7 717l-9 14 M777.1 717l-9 14 M786.6 717l-9 14 M796.0 717l-9 14 M805.4 717l-9 14 M814.9 717l-9 14 M824.3 717l-9 14 M833.8 717l-9 14 M843.2 717l-9 14 M852.6 717l-9 14 M862.1 717l-9 14 M871.5 717l-9 14 M881.0 717l-9 14 M890.4 717l-9 14 M899.8 717l-9 14 M909.3 717l-9 14 M918.7 717l-9 14 M928.2 717l-9 14 M937.6 717l-9 14 M947.0 717l-9 14 M956.5 717l-9 14 M965.9 717l-9 14 M975.4 717l-9 14 M984.8 717l-9 14 M994.2 717l-9 14 M1003.7 717l-9 14 M1013.1 717l-9 14 M1022.6 717l-9 14 M1032.0 717l-9 14 M1041.4 717l-9 14 M1050.9 717l-9 14 M1060.3 717l-9 14 M1069.8 717l-9 14 M1079.2 717l-9 14 M1088.6 717l-9 14 M1098.1 717l-9 14"/>
</g>
<g fill="none" stroke-dasharray="5 3">
<path d="M784.5 627 A50 50 0 0 1 766 713"/>
<path d="M777.9 627 A46 46 0 0 1 764 709.4"/>
<path d="M760.6 660 L860 635.3"/>
<path d="M762 666 L899.4 639.7"/>
<path d="M804.2 627.8 C812 640 818 650 817.8 660 L810 678 L811.7 685.7 L835.8 679.7 L822.3 627.8"/>
<path d="M804 654 L810 757"/>
<path d="M903.6 622.3 L903.6 612.5 L930.6 612.5 L930.6 623.8 L956 635"/>
<path d="M903.6 622.3 L864.5 650 M866 650 L905 638 L909.6 645 M871.7 611.4 L883.2 650"/>
<path d="M864 647.8 L900 623.5"/>
<path d="M820.8 627 L834.7 679 M832.4 627 L840.5 661.7 M848.6 627 L856.6 657 M855.5 627 L863.6 655 M829 634 L856.6 631.6 M829 640.9 L856.6 637"/>
</g>
<text display="none" x="634.3" y="109.4" font-family="Liberation Serif" font-size="15.6" style="letter-spacing:1.15px" fill="currentColor">FIG.1</text>
<text display="none" x="1072" y="685" font-family="Liberation Sans" font-size="16" fill="currentColor" stroke="none">G.L</text>
<rect x="870.0" y="139.2" width="16" height="9" stroke="none" fill="currentColor"/><rect x="981.0" y="203.0" width="16" height="9" stroke="none" fill="currentColor"/><rect x="863.6" y="217.7" width="16" height="9" stroke="none" fill="currentColor"/><rect x="1091.0" y="218.8" width="16" height="9" stroke="none" fill="currentColor"/><rect x="1092.7" y="326.0" width="16" height="9" stroke="none" fill="currentColor"/><rect x="878.8" y="392.0" width="16" height="9" stroke="none" fill="currentColor"/><rect x="1046.7" y="403.5" width="16" height="9" stroke="none" fill="currentColor"/><rect x="810.6" y="442.4" width="16" height="9" stroke="none" fill="currentColor"/><rect x="816.4" y="491.5" width="16" height="9" stroke="none" fill="currentColor"/><rect x="718.0" y="529.8" width="16" height="9" stroke="none" fill="currentColor"/><rect x="874.5" y="525.5" width="16" height="9" stroke="none" fill="currentColor"/><rect x="854.2" y="555.0" width="16" height="9" stroke="none" fill="currentColor"/><rect x="889.7" y="558.0" width="16" height="9" stroke="none" fill="currentColor"/><rect x="717.0" y="569.0" width="16" height="9" stroke="none" fill="currentColor"/><rect x="835.7" y="583.0" width="16" height="9" stroke="none" fill="currentColor"/><rect x="652.0" y="613.0" width="16" height="9" stroke="none" fill="currentColor"/><rect x="959.0" y="613.0" width="16" height="9" stroke="none" fill="currentColor"/><rect x="1048.0" y="648.0" width="16" height="9" stroke="none" fill="currentColor"/><rect x="667.3" y="685.0" width="16" height="9" stroke="none" fill="currentColor"/><rect x="1024.0" y="692.6" width="16" height="9" stroke="none" fill="currentColor"/><rect x="741.3" y="752.3" width="16" height="9" stroke="none" fill="currentColor"/><rect x="799.0" y="752.3" width="16" height="9" stroke="none" fill="currentColor"/><rect x="774.7" y="762.0" width="16" height="9" stroke="none" fill="currentColor"/></g></g></svg></div>
<div class="th sel" style="left:364.4px;top:223.3px"><svg style="position:absolute;left:0;top:0" width="96" height="100"><g transform="translate(-75 -11.7) scale(0.14)" stroke-width="3.6"><g stroke="#707070" color="#707070"><g fill="none" stroke-linecap="round" stroke-linejoin="round">
<!-- FIG.1 -->
<!-- frame left outer -->
<path d="M914.3 153.5 L940.3 231.6 C950 262 958 292 962 322 C965 350 965.5 390 963.5 442 C962 462 957 472 953 484 L933.8 551 L922.7 575 L909.7 597"/>
<!-- right handle line / upper arm -->
<path d="M927.9 153.5 L960 232.6 L977.8 273 C985 290 995 303 1011 303.5 C1025 304 1035 298 1048.4 290 L1111.3 258.6"/>
<!-- lower arm -->
<path d="M1117 268.4 L1068 305 C1045 321 1020 333 1013 362 L1010.5 400 L1012.5 560 L1013 627.6 A108 87 0 0 1 905 714.7"/>
<!-- handlebar circle -->
<circle cx="1116.6" cy="261.5" r="6"/>
<!-- slot -->
<path d="M950.3 551 C958 500 972 460 979.6 398.5 C980.5 390 993.5 390 994.9 398.5 L992.3 551 L986.8 575"/>
<path d="M950.3 551 L950 575"/>
<!-- leaders -->
<path d="M950.7 210.7 C958 205 968 212 975.7 207.6"/>
<path d="M1101.5 233 C1104 242 1108 250 1111.3 258.6"/>
<path d="M1070 302.8 C1078 312 1082 325 1088.7 326.4"/>
<path d="M1011 406 C1022 402 1030 410 1043 408"/>
<path d="M907 407.4 C910 414 914 418 921 420"/>
<path d="M921 420 l-8 -1 l4 -5 z" fill="currentColor"/>
<path d="M899.8 233 l8 -1"/><path d="M912 231.3 l-8 -2.8 l1 4.8 z" fill="currentColor"/>
<!-- shooter cap -->
<path d="M740.6 453 L774 445 L784.5 482 L748.7 491 Z"/>
<path d="M748.7 491 L788 484.3 L788.5 489 L751 495.9 Z"/>
<!-- shooter tube -->
<path d="M754.5 496 L784.5 592"/>
<path d="M784.5 488 L825.4 626.4 L843.3 685.7"/>
<!-- blower casing bottom line -->
<path d="M746 607 L815.7 589.5"/>
<path d="M781 583.8 L784.5 595"/>
<path d="M781 460 C792 455 798 446 807.6 444"/>
<path d="M822.7 505 C820 518 818 525 812 533"/>
<path d="M812 533 l1 -9 l5 4 z" fill="currentColor"/>
<path d="M725.5 583.8 C738 590 740 600 747.5 607"/>
<path d="M824 564 C822 562 826 558 829 561"/>
<!-- 40 arrow -->
<path d="M681 630 C685 635 690 637 697 638"/>
<path d="M697 638 l-8 -4 l1 6 z" fill="currentColor"/>
<!-- auger housing -->
<path d="M714 627.8 L765.2 715.7 L786.2 702.2 L843.3 685.7"/>
<circle cx="751.6" cy="665.4" r="9"/>
<circle cx="751.6" cy="665.4" r="3.8"/>
<path d="M719.3 634.6 A47 47 0 0 0 760.6 712"/>
<path d="M727.6 639 A35 35 0 0 0 754.6 700"/>
<path d="M712.5 678 C711 668 711 658 714 649.6"/>
<path d="M714 647 l-2.8 7 l5 0 z" fill="currentColor"/>
<path d="M733.6 685 L750 669"/>
<path d="M724.6 678 L740 671"/>
<path d="M749.4 675 C748 700 747 720 751.6 748"/>
<path d="M771 708 C778 716 780 725 780 757"/>
<!-- tube upper & worm box -->
<path d="M853.2 624.7 L853.2 616.6 L871.7 611.4 L874 620"/>
<path d="M827.7 632.8 L853.2 624.7 L874 620 C885 616.5 898 609 911.8 596.8 L957.7 633.6 L986 652 C990 655 993 653 994 650 L997.5 641"/>
<path d="M837.6 662.3 L956 633.6 L1011 641.8"/>
<path d="M864 597 L864 613 M893.5 597 L893.5 608 M858 572 L858 578 M899.5 572 L899.5 578"/>
<path d="M879.2 541 C881 555 880 568 876.5 577"/><path d="M876 578.5 l-1.5 -6.5 l5 2 z" fill="currentColor"/>
<path d="M842 597 C842 604 840 608 838 611"/>
<!-- sled -->
<path d="M866.5 654 L896 708.7 C898 713 901 714.7 905 714.7"/>
<path d="M881 652.4 L904 699.5 C906 703 910.5 702 910.3 697 L909.6 645"/>
<path d="M935 640.3 L980 665 C985 668 984 672 982 674 C970 690 950 700 929 702.5 C926 703 924.6 701 924.6 698 L924.6 645 C924.6 642 926 641 928 641.5"/>

<!-- fulcrum -->
<circle cx="917" cy="621.5" r="3.2"/>
<path d="M919 619 C925 616 940 617 956 617"/>
<!-- 20 arrow & 21 leader -->
<path d="M1044 654 C1035 654 1028 658 1015 661"/>
<path d="M1013 661 l8 -5 l1 7 z" fill="currentColor"/>
<path d="M993.7 681.6 C1005 685 1010 693 1021 693.7"/>
<path d="M1083 706 C1086 710 1086 713 1085 716"/>
<!-- ground -->
<path d="M690 716.4 L1106 716.4"/>
<path d="M701.6 717l-9 14 M711.0 717l-9 14 M720.5 717l-9 14 M729.9 717l-9 14 M739.4 717l-9 14 M748.8 717l-9 14 M758.2 717l-9 14 M767.7 717l-9 14 M777.1 717l-9 14 M786.6 717l-9 14 M796.0 717l-9 14 M805.4 717l-9 14 M814.9 717l-9 14 M824.3 717l-9 14 M833.8 717l-9 14 M843.2 717l-9 14 M852.6 717l-9 14 M862.1 717l-9 14 M871.5 717l-9 14 M881.0 717l-9 14 M890.4 717l-9 14 M899.8 717l-9 14 M909.3 717l-9 14 M918.7 717l-9 14 M928.2 717l-9 14 M937.6 717l-9 14 M947.0 717l-9 14 M956.5 717l-9 14 M965.9 717l-9 14 M975.4 717l-9 14 M984.8 717l-9 14 M994.2 717l-9 14 M1003.7 717l-9 14 M1013.1 717l-9 14 M1022.6 717l-9 14 M1032.0 717l-9 14 M1041.4 717l-9 14 M1050.9 717l-9 14 M1060.3 717l-9 14 M1069.8 717l-9 14 M1079.2 717l-9 14 M1088.6 717l-9 14 M1098.1 717l-9 14"/>
</g>
<g fill="none" stroke-dasharray="5 3">
<path d="M784.5 627 A50 50 0 0 1 766 713"/>
<path d="M777.9 627 A46 46 0 0 1 764 709.4"/>
<path d="M760.6 660 L860 635.3"/>
<path d="M762 666 L899.4 639.7"/>
<path d="M804.2 627.8 C812 640 818 650 817.8 660 L810 678 L811.7 685.7 L835.8 679.7 L822.3 627.8"/>
<path d="M804 654 L810 757"/>
<path d="M903.6 622.3 L903.6 612.5 L930.6 612.5 L930.6 623.8 L956 635"/>
<path d="M903.6 622.3 L864.5 650 M866 650 L905 638 L909.6 645 M871.7 611.4 L883.2 650"/>
<path d="M864 647.8 L900 623.5"/>
<path d="M820.8 627 L834.7 679 M832.4 627 L840.5 661.7 M848.6 627 L856.6 657 M855.5 627 L863.6 655 M829 634 L856.6 631.6 M829 640.9 L856.6 637"/>
</g>
<text display="none" x="634.3" y="109.4" font-family="Liberation Serif" font-size="15.6" style="letter-spacing:1.15px" fill="currentColor">FIG.1</text>
<text display="none" x="1072" y="685" font-family="Liberation Sans" font-size="16" fill="currentColor" stroke="none">G.L</text>
<rect x="870.0" y="139.2" width="16" height="9" stroke="none" fill="currentColor"/><rect x="981.0" y="203.0" width="16" height="9" stroke="none" fill="currentColor"/><rect x="863.6" y="217.7" width="16" height="9" stroke="none" fill="currentColor"/><rect x="1091.0" y="218.8" width="16" height="9" stroke="none" fill="currentColor"/><rect x="1092.7" y="326.0" width="16" height="9" stroke="none" fill="currentColor"/><rect x="878.8" y="392.0" width="16" height="9" stroke="none" fill="currentColor"/><rect x="1046.7" y="403.5" width="16" height="9" stroke="none" fill="currentColor"/><rect x="810.6" y="442.4" width="16" height="9" stroke="none" fill="currentColor"/><rect x="816.4" y="491.5" width="16" height="9" stroke="none" fill="currentColor"/><rect x="718.0" y="529.8" width="16" height="9" stroke="none" fill="currentColor"/><rect x="874.5" y="525.5" width="16" height="9" stroke="none" fill="currentColor"/><rect x="854.2" y="555.0" width="16" height="9" stroke="none" fill="currentColor"/><rect x="889.7" y="558.0" width="16" height="9" stroke="none" fill="currentColor"/><rect x="717.0" y="569.0" width="16" height="9" stroke="none" fill="currentColor"/><rect x="835.7" y="583.0" width="16" height="9" stroke="none" fill="currentColor"/><rect x="652.0" y="613.0" width="16" height="9" stroke="none" fill="currentColor"/><rect x="959.0" y="613.0" width="16" height="9" stroke="none" fill="currentColor"/><rect x="1048.0" y="648.0" width="16" height="9" stroke="none" fill="currentColor"/><rect x="667.3" y="685.0" width="16" height="9" stroke="none" fill="currentColor"/><rect x="1024.0" y="692.6" width="16" height="9" stroke="none" fill="currentColor"/><rect x="741.3" y="752.3" width="16" height="9" stroke="none" fill="currentColor"/><rect x="799.0" y="752.3" width="16" height="9" stroke="none" fill="currentColor"/><rect x="774.7" y="762.0" width="16" height="9" stroke="none" fill="currentColor"/></g></g></svg></div>
<div class="th" style="left:260.6px;top:331px"><svg style="position:absolute;left:0;top:0" width="96" height="100"><g fill="none" stroke="#858585" stroke-width="0.6"><path d="M9 30 C18 26 30 30 36 34 C28 38 16 38 9 34 M9 42 C18 38 30 42 36 46 C28 50 16 50 9 46 M9 56 C18 52 30 56 36 60 C28 64 16 64 9 60 M9 68 C18 64 30 68 36 72 C28 76 16 76 9 72 M12 30 L12 76 M33 30 L33 76"/><path d="M43.5 36.6 H88.5 V68.5 H43.5 Z M44.5 47 H59.5 V58 H44.5 Z M56 36.6 L56 32 H86 V36.6 M36 52 H43.5 M70 36.6 V68.5"/><path d="M30 20 V26 M40 24 V30 M25 80 V84 M50 72 H60 M82 50 H86"/></g><g fill="#8a8a8a"><rect x="5" y="16" width="6" height="2"/><rect x="26" y="17" width="3" height="2"/><rect x="44" y="22" width="3" height="2"/><rect x="60" y="73" width="4" height="2"/><rect x="30" y="82" width="3" height="2"/><rect x="4" y="50" width="3" height="2"/><rect x="80" y="46" width="4" height="2"/></g></svg></div>
<div class="th" style="left:364.4px;top:331px"><svg style="position:absolute;left:0;top:0" width="96" height="100"><g fill="none" stroke="#858585" stroke-width="0.6"><path d="M42.4 16.6 H65.8 V60.5 L62 79 H46 L42.4 60.5 Z M42.4 31 H65.8 M55 12 V16.6 M48 60 L56 70 L62 58 M30 24 C34 22 36 24 38 26 M70 70 C72 66 74 64 76 62"/><circle cx="47" cy="86" r="5"/><circle cx="55" cy="86" r="5"/><circle cx="62" cy="86" r="4"/><path d="M66 40 H72 M66 52 H72 M36 84 H42"/></g><g fill="#8a8a8a"><rect x="20" y="6" width="6" height="2"/><rect x="52" y="20" width="4" height="2"/><rect x="52" y="34" width="4" height="2"/><rect x="72" y="22" width="3" height="2"/><rect x="72" y="38" width="3" height="2"/><rect x="33" y="82" width="3" height="2"/><rect x="68" y="60" width="3" height="2"/><rect x="44" y="94" width="3" height="2"/></g></svg></div>
<div class="th" style="left:260.6px;top:439.3px"><svg style="position:absolute;left:0;top:0" width="96" height="100"><g fill="none" stroke="#858585" stroke-width="0.6"><path d="M67.2 14 V36.6 H85.8 M67.2 37.7 L51.2 71 M48.6 71 L59.3 69 L62 81.8 L46 81.8 Z M59 70 L68 76 L62 82 M13 86.4 H74 M13 64 C16 62 20 64 22 70 L22 86 M67 22 H72 M67 30 H71 M80 32 V42"/><circle cx="26.3" cy="79" r="5.8"/><path d="M14 70 L18 86 M16 68 L20 86 M13 74 L16 86" stroke-width="0.4"/></g><g fill="#8a8a8a"><rect x="8" y="6" width="6" height="2"/><rect x="70" y="12" width="3" height="2"/><rect x="70" y="26" width="3" height="2"/><rect x="44" y="18" width="3" height="2"/><rect x="80" y="44" width="3" height="2"/><rect x="60" y="57" width="3" height="2"/><rect x="24" y="66" width="3" height="2"/><rect x="37" y="70" width="3" height="2"/><rect x="24" y="90" width="6" height="2"/></g></svg></div>
<div class="th" style="left:364.4px;top:439.3px"><svg style="position:absolute;left:0;top:0" width="96" height="100"><g transform="translate(-77 -9) scale(0.14)" stroke-width="3.6"><g stroke="#707070" color="#707070"><g fill="none" stroke-linecap="round" stroke-linejoin="round">
<!-- FIG.1 -->
<!-- frame left outer -->
<path d="M914.3 153.5 L940.3 231.6 C950 262 958 292 962 322 C965 350 965.5 390 963.5 442 C962 462 957 472 953 484 L933.8 551 L922.7 575 L909.7 597"/>
<!-- right handle line / upper arm -->
<path d="M927.9 153.5 L960 232.6 L977.8 273 C985 290 995 303 1011 303.5 C1025 304 1035 298 1048.4 290 L1111.3 258.6"/>
<!-- lower arm -->
<path d="M1117 268.4 L1068 305 C1045 321 1020 333 1013 362 L1010.5 400 L1012.5 560 L1013 627.6 A108 87 0 0 1 905 714.7"/>
<!-- handlebar circle -->
<circle cx="1116.6" cy="261.5" r="6"/>
<!-- slot -->
<path d="M950.3 551 C958 500 972 460 979.6 398.5 C980.5 390 993.5 390 994.9 398.5 L992.3 551 L986.8 575"/>
<path d="M950.3 551 L950 575"/>
<!-- leaders -->
<path d="M950.7 210.7 C958 205 968 212 975.7 207.6"/>
<path d="M1101.5 233 C1104 242 1108 250 1111.3 258.6"/>
<path d="M1070 302.8 C1078 312 1082 325 1088.7 326.4"/>
<path d="M1011 406 C1022 402 1030 410 1043 408"/>
<path d="M907 407.4 C910 414 914 418 921 420"/>
<path d="M921 420 l-8 -1 l4 -5 z" fill="currentColor"/>
<path d="M899.8 233 l8 -1"/><path d="M912 231.3 l-8 -2.8 l1 4.8 z" fill="currentColor"/>
<!-- shooter cap -->
<path d="M740.6 453 L774 445 L784.5 482 L748.7 491 Z"/>
<path d="M748.7 491 L788 484.3 L788.5 489 L751 495.9 Z"/>
<!-- shooter tube -->
<path d="M754.5 496 L784.5 592"/>
<path d="M784.5 488 L825.4 626.4 L843.3 685.7"/>
<!-- blower casing bottom line -->
<path d="M746 607 L815.7 589.5"/>
<path d="M781 583.8 L784.5 595"/>
<path d="M781 460 C792 455 798 446 807.6 444"/>
<path d="M822.7 505 C820 518 818 525 812 533"/>
<path d="M812 533 l1 -9 l5 4 z" fill="currentColor"/>
<path d="M725.5 583.8 C738 590 740 600 747.5 607"/>
<path d="M824 564 C822 562 826 558 829 561"/>
<!-- 40 arrow -->
<path d="M681 630 C685 635 690 637 697 638"/>
<path d="M697 638 l-8 -4 l1 6 z" fill="currentColor"/>
<!-- auger housing -->
<path d="M714 627.8 L765.2 715.7 L786.2 702.2 L843.3 685.7"/>
<circle cx="751.6" cy="665.4" r="9"/>
<circle cx="751.6" cy="665.4" r="3.8"/>
<path d="M719.3 634.6 A47 47 0 0 0 760.6 712"/>
<path d="M727.6 639 A35 35 0 0 0 754.6 700"/>
<path d="M712.5 678 C711 668 711 658 714 649.6"/>
<path d="M714 647 l-2.8 7 l5 0 z" fill="currentColor"/>
<path d="M733.6 685 L750 669"/>
<path d="M724.6 678 L740 671"/>
<path d="M749.4 675 C748 700 747 720 751.6 748"/>
<path d="M771 708 C778 716 780 725 780 757"/>
<!-- tube upper & worm box -->
<path d="M853.2 624.7 L853.2 616.6 L871.7 611.4 L874 620"/>
<path d="M827.7 632.8 L853.2 624.7 L874 620 C885 616.5 898 609 911.8 596.8 L957.7 633.6 L986 652 C990 655 993 653 994 650 L997.5 641"/>
<path d="M837.6 662.3 L956 633.6 L1011 641.8"/>
<path d="M864 597 L864 613 M893.5 597 L893.5 608 M858 572 L858 578 M899.5 572 L899.5 578"/>
<path d="M879.2 541 C881 555 880 568 876.5 577"/><path d="M876 578.5 l-1.5 -6.5 l5 2 z" fill="currentColor"/>
<path d="M842 597 C842 604 840 608 838 611"/>
<!-- sled -->
<path d="M866.5 654 L896 708.7 C898 713 901 714.7 905 714.7"/>
<path d="M881 652.4 L904 699.5 C906 703 910.5 702 910.3 697 L909.6 645"/>
<path d="M935 640.3 L980 665 C985 668 984 672 982 674 C970 690 950 700 929 702.5 C926 703 924.6 701 924.6 698 L924.6 645 C924.6 642 926 641 928 641.5"/>

<!-- fulcrum -->
<circle cx="917" cy="621.5" r="3.2"/>
<path d="M919 619 C925 616 940 617 956 617"/>
<!-- 20 arrow & 21 leader -->
<path d="M1044 654 C1035 654 1028 658 1015 661"/>
<path d="M1013 661 l8 -5 l1 7 z" fill="currentColor"/>
<path d="M993.7 681.6 C1005 685 1010 693 1021 693.7"/>
<path d="M1083 706 C1086 710 1086 713 1085 716"/>
<!-- ground -->
<path d="M690 716.4 L1106 716.4"/>
<path d="M701.6 717l-9 14 M711.0 717l-9 14 M720.5 717l-9 14 M729.9 717l-9 14 M739.4 717l-9 14 M748.8 717l-9 14 M758.2 717l-9 14 M767.7 717l-9 14 M777.1 717l-9 14 M786.6 717l-9 14 M796.0 717l-9 14 M805.4 717l-9 14 M814.9 717l-9 14 M824.3 717l-9 14 M833.8 717l-9 14 M843.2 717l-9 14 M852.6 717l-9 14 M862.1 717l-9 14 M871.5 717l-9 14 M881.0 717l-9 14 M890.4 717l-9 14 M899.8 717l-9 14 M909.3 717l-9 14 M918.7 717l-9 14 M928.2 717l-9 14 M937.6 717l-9 14 M947.0 717l-9 14 M956.5 717l-9 14 M965.9 717l-9 14 M975.4 717l-9 14 M984.8 717l-9 14 M994.2 717l-9 14 M1003.7 717l-9 14 M1013.1 717l-9 14 M1022.6 717l-9 14 M1032.0 717l-9 14 M1041.4 717l-9 14 M1050.9 717l-9 14 M1060.3 717l-9 14 M1069.8 717l-9 14 M1079.2 717l-9 14 M1088.6 717l-9 14 M1098.1 717l-9 14"/>
</g>
<g fill="none" stroke-dasharray="5 3">
<path d="M784.5 627 A50 50 0 0 1 766 713"/>
<path d="M777.9 627 A46 46 0 0 1 764 709.4"/>
<path d="M760.6 660 L860 635.3"/>
<path d="M762 666 L899.4 639.7"/>
<path d="M804.2 627.8 C812 640 818 650 817.8 660 L810 678 L811.7 685.7 L835.8 679.7 L822.3 627.8"/>
<path d="M804 654 L810 757"/>
<path d="M903.6 622.3 L903.6 612.5 L930.6 612.5 L930.6 623.8 L956 635"/>
<path d="M903.6 622.3 L864.5 650 M866 650 L905 638 L909.6 645 M871.7 611.4 L883.2 650"/>
<path d="M864 647.8 L900 623.5"/>
<path d="M820.8 627 L834.7 679 M832.4 627 L840.5 661.7 M848.6 627 L856.6 657 M855.5 627 L863.6 655 M829 634 L856.6 631.6 M829 640.9 L856.6 637"/>
</g>
<text display="none" x="634.3" y="109.4" font-family="Liberation Serif" font-size="15.6" style="letter-spacing:1.15px" fill="currentColor">FIG.1</text>
<text display="none" x="1072" y="685" font-family="Liberation Sans" font-size="16" fill="currentColor" stroke="none">G.L</text>
<rect x="870.0" y="139.2" width="16" height="9" stroke="none" fill="currentColor"/><rect x="981.0" y="203.0" width="16" height="9" stroke="none" fill="currentColor"/><rect x="863.6" y="217.7" width="16" height="9" stroke="none" fill="currentColor"/><rect x="1091.0" y="218.8" width="16" height="9" stroke="none" fill="currentColor"/><rect x="1092.7" y="326.0" width="16" height="9" stroke="none" fill="currentColor"/><rect x="878.8" y="392.0" width="16" height="9" stroke="none" fill="currentColor"/><rect x="1046.7" y="403.5" width="16" height="9" stroke="none" fill="currentColor"/><rect x="810.6" y="442.4" width="16" height="9" stroke="none" fill="currentColor"/><rect x="816.4" y="491.5" width="16" height="9" stroke="none" fill="currentColor"/><rect x="718.0" y="529.8" width="16" height="9" stroke="none" fill="currentColor"/><rect x="874.5" y="525.5" width="16" height="9" stroke="none" fill="currentColor"/><rect x="854.2" y="555.0" width="16" height="9" stroke="none" fill="currentColor"/><rect x="889.7" y="558.0" width="16" height="9" stroke="none" fill="currentColor"/><rect x="717.0" y="569.0" width="16" height="9" stroke="none" fill="currentColor"/><rect x="835.7" y="583.0" width="16" height="9" stroke="none" fill="currentColor"/><rect x="652.0" y="613.0" width="16" height="9" stroke="none" fill="currentColor"/><rect x="959.0" y="613.0" width="16" height="9" stroke="none" fill="currentColor"/><rect x="1048.0" y="648.0" width="16" height="9" stroke="none" fill="currentColor"/><rect x="667.3" y="685.0" width="16" height="9" stroke="none" fill="currentColor"/><rect x="1024.0" y="692.6" width="16" height="9" stroke="none" fill="currentColor"/><rect x="741.3" y="752.3" width="16" height="9" stroke="none" fill="currentColor"/><rect x="799.0" y="752.3" width="16" height="9" stroke="none" fill="currentColor"/><rect x="774.7" y="762.0" width="16" height="9" stroke="none" fill="currentColor"/></g></g></svg></div>
<div class="th" style="left:260.6px;top:547.6px"><svg style="position:absolute;left:0;top:0" width="96" height="100"><g fill="none" stroke="#858585" stroke-width="0.6"><path d="M29.9 14.7 L52.6 30.7 L67.2 14.7 M32 14 L53 27 L66 12 M52.6 30.7 L59.3 62 M56 30 L71 62 M75.2 12 V85.2 M41 59.8 H73 V70.5 H41 Z M24 69 H41 M50 62 L58 72"/><circle cx="46" cy="76.8" r="6.6"/><circle cx="60" cy="70" r="5"/><path d="M40 84 L50 88"/></g><g fill="#8a8a8a"><rect x="14" y="8" width="5" height="2"/><rect x="45" y="14" width="3" height="2"/><rect x="24" y="24" width="3" height="2"/><rect x="77" y="24" width="3" height="2"/><rect x="40" y="36" width="3" height="2"/><rect x="44" y="46" width="3" height="2"/><rect x="30" y="58" width="3" height="2"/><rect x="22" y="62" width="3" height="2"/><rect x="12" y="66" width="3" height="2"/><rect x="33" y="80" width="3" height="2"/><rect x="68" y="80" width="3" height="2"/><rect x="50" y="90" width="3" height="2"/></g></svg></div>
<div class="th" style="left:364.4px;top:547.6px"><svg style="position:absolute;left:0;top:0" width="96" height="100"><g transform="translate(-77 -11) scale(0.14)" stroke-width="3.6"><g stroke="#707070" color="#707070"><g fill="none" stroke-linecap="round" stroke-linejoin="round">
<!-- FIG.1 -->
<!-- frame left outer -->
<path d="M914.3 153.5 L940.3 231.6 C950 262 958 292 962 322 C965 350 965.5 390 963.5 442 C962 462 957 472 953 484 L933.8 551 L922.7 575 L909.7 597"/>
<!-- right handle line / upper arm -->
<path d="M927.9 153.5 L960 232.6 L977.8 273 C985 290 995 303 1011 303.5 C1025 304 1035 298 1048.4 290 L1111.3 258.6"/>
<!-- lower arm -->
<path d="M1117 268.4 L1068 305 C1045 321 1020 333 1013 362 L1010.5 400 L1012.5 560 L1013 627.6 A108 87 0 0 1 905 714.7"/>
<!-- handlebar circle -->
<circle cx="1116.6" cy="261.5" r="6"/>
<!-- slot -->
<path d="M950.3 551 C958 500 972 460 979.6 398.5 C980.5 390 993.5 390 994.9 398.5 L992.3 551 L986.8 575"/>
<path d="M950.3 551 L950 575"/>
<!-- leaders -->
<path d="M950.7 210.7 C958 205 968 212 975.7 207.6"/>
<path d="M1101.5 233 C1104 242 1108 250 1111.3 258.6"/>
<path d="M1070 302.8 C1078 312 1082 325 1088.7 326.4"/>
<path d="M1011 406 C1022 402 1030 410 1043 408"/>
<path d="M907 407.4 C910 414 914 418 921 420"/>
<path d="M921 420 l-8 -1 l4 -5 z" fill="currentColor"/>
<path d="M899.8 233 l8 -1"/><path d="M912 231.3 l-8 -2.8 l1 4.8 z" fill="currentColor"/>
<!-- shooter cap -->
<path d="M740.6 453 L774 445 L784.5 482 L748.7 491 Z"/>
<path d="M748.7 491 L788 484.3 L788.5 489 L751 495.9 Z"/>
<!-- shooter tube -->
<path d="M754.5 496 L784.5 592"/>
<path d="M784.5 488 L825.4 626.4 L843.3 685.7"/>
<!-- blower casing bottom line -->
<path d="M746 607 L815.7 589.5"/>
<path d="M781 583.8 L784.5 595"/>
<path d="M781 460 C792 455 798 446 807.6 444"/>
<path d="M822.7 505 C820 518 818 525 812 533"/>
<path d="M812 533 l1 -9 l5 4 z" fill="currentColor"/>
<path d="M725.5 583.8 C738 590 740 600 747.5 607"/>
<path d="M824 564 C822 562 826 558 829 561"/>
<!-- 40 arrow -->
<path d="M681 630 C685 635 690 637 697 638"/>
<path d="M697 638 l-8 -4 l1 6 z" fill="currentColor"/>
<!-- auger housing -->
<path d="M714 627.8 L765.2 715.7 L786.2 702.2 L843.3 685.7"/>
<circle cx="751.6" cy="665.4" r="9"/>
<circle cx="751.6" cy="665.4" r="3.8"/>
<path d="M719.3 634.6 A47 47 0 0 0 760.6 712"/>
<path d="M727.6 639 A35 35 0 0 0 754.6 700"/>
<path d="M712.5 678 C711 668 711 658 714 649.6"/>
<path d="M714 647 l-2.8 7 l5 0 z" fill="currentColor"/>
<path d="M733.6 685 L750 669"/>
<path d="M724.6 678 L740 671"/>
<path d="M749.4 675 C748 700 747 720 751.6 748"/>
<path d="M771 708 C778 716 780 725 780 757"/>
<!-- tube upper & worm box -->
<path d="M853.2 624.7 L853.2 616.6 L871.7 611.4 L874 620"/>
<path d="M827.7 632.8 L853.2 624.7 L874 620 C885 616.5 898 609 911.8 596.8 L957.7 633.6 L986 652 C990 655 993 653 994 650 L997.5 641"/>
<path d="M837.6 662.3 L956 633.6 L1011 641.8"/>
<path d="M864 597 L864 613 M893.5 597 L893.5 608 M858 572 L858 578 M899.5 572 L899.5 578"/>
<path d="M879.2 541 C881 555 880 568 876.5 577"/><path d="M876 578.5 l-1.5 -6.5 l5 2 z" fill="currentColor"/>
<path d="M842 597 C842 604 840 608 838 611"/>
<!-- sled -->
<path d="M866.5 654 L896 708.7 C898 713 901 714.7 905 714.7"/>
<path d="M881 652.4 L904 699.5 C906 703 910.5 702 910.3 697 L909.6 645"/>
<path d="M935 640.3 L980 665 C985 668 984 672 982 674 C970 690 950 700 929 702.5 C926 703 924.6 701 924.6 698 L924.6 645 C924.6 642 926 641 928 641.5"/>

<!-- fulcrum -->
<circle cx="917" cy="621.5" r="3.2"/>
<path d="M919 619 C925 616 940 617 956 617"/>
<!-- 20 arrow & 21 leader -->
<path d="M1044 654 C1035 654 1028 658 1015 661"/>
<path d="M1013 661 l8 -5 l1 7 z" fill="currentColor"/>
<path d="M993.7 681.6 C1005 685 1010 693 1021 693.7"/>
<path d="M1083 706 C1086 710 1086 713 1085 716"/>
<!-- ground -->
<path d="M690 716.4 L1106 716.4"/>
<path d="M701.6 717l-9 14 M711.0 717l-9 14 M720.5 717l-9 14 M729.9 717l-9 14 M739.4 717l-9 14 M748.8 717l-9 14 M758.2 717l-9 14 M767.7 717l-9 14 M777.1 717l-9 14 M786.6 717l-9 14 M796.0 717l-9 14 M805.4 717l-9 14 M814.9 717l-9 14 M824.3 717l-9 14 M833.8 717l-9 14 M843.2 717l-9 14 M852.6 717l-9 14 M862.1 717l-9 14 M871.5 717l-9 14 M881.0 717l-9 14 M890.4 717l-9 14 M899.8 717l-9 14 M909.3 717l-9 14 M918.7 717l-9 14 M928.2 717l-9 14 M937.6 717l-9 14 M947.0 717l-9 14 M956.5 717l-9 14 M965.9 717l-9 14 M975.4 717l-9 14 M984.8 717l-9 14 M994.2 717l-9 14 M1003.7 717l-9 14 M1013.1 717l-9 14 M1022.6 717l-9 14 M1032.0 717l-9 14 M1041.4 717l-9 14 M1050.9 717l-9 14 M1060.3 717l-9 14 M1069.8 717l-9 14 M1079.2 717l-9 14 M1088.6 717l-9 14 M1098.1 717l-9 14"/>
</g>
<g fill="none" stroke-dasharray="5 3">
<path d="M784.5 627 A50 50 0 0 1 766 713"/>
<path d="M777.9 627 A46 46 0 0 1 764 709.4"/>
<path d="M760.6 660 L860 635.3"/>
<path d="M762 666 L899.4 639.7"/>
<path d="M804.2 627.8 C812 640 818 650 817.8 660 L810 678 L811.7 685.7 L835.8 679.7 L822.3 627.8"/>
<path d="M804 654 L810 757"/>
<path d="M903.6 622.3 L903.6 612.5 L930.6 612.5 L930.6 623.8 L956 635"/>
<path d="M903.6 622.3 L864.5 650 M866 650 L905 638 L909.6 645 M871.7 611.4 L883.2 650"/>
<path d="M864 647.8 L900 623.5"/>
<path d="M820.8 627 L834.7 679 M832.4 627 L840.5 661.7 M848.6 627 L856.6 657 M855.5 627 L863.6 655 M829 634 L856.6 631.6 M829 640.9 L856.6 637"/>
</g>
<text display="none" x="634.3" y="109.4" font-family="Liberation Serif" font-size="15.6" style="letter-spacing:1.15px" fill="currentColor">FIG.1</text>
<text display="none" x="1072" y="685" font-family="Liberation Sans" font-size="16" fill="currentColor" stroke="none">G.L</text>
<rect x="870.0" y="139.2" width="16" height="9" stroke="none" fill="currentColor"/><rect x="981.0" y="203.0" width="16" height="9" stroke="none" fill="currentColor"/><rect x="863.6" y="217.7" width="16" height="9" stroke="none" fill="currentColor"/><rect x="1091.0" y="218.8" width="16" height="9" stroke="none" fill="currentColor"/><rect x="1092.7" y="326.0" width="16" height="9" stroke="none" fill="currentColor"/><rect x="878.8" y="392.0" width="16" height="9" stroke="none" fill="currentColor"/><rect x="1046.7" y="403.5" width="16" height="9" stroke="none" fill="currentColor"/><rect x="810.6" y="442.4" width="16" height="9" stroke="none" fill="currentColor"/><rect x="816.4" y="491.5" width="16" height="9" stroke="none" fill="currentColor"/><rect x="718.0" y="529.8" width="16" height="9" stroke="none" fill="currentColor"/><rect x="874.5" y="525.5" width="16" height="9" stroke="none" fill="currentColor"/><rect x="854.2" y="555.0" width="16" height="9" stroke="none" fill="currentColor"/><rect x="889.7" y="558.0" width="16" height="9" stroke="none" fill="currentColor"/><rect x="717.0" y="569.0" width="16" height="9" stroke="none" fill="currentColor"/><rect x="835.7" y="583.0" width="16" height="9" stroke="none" fill="currentColor"/><rect x="652.0" y="613.0" width="16" height="9" stroke="none" fill="currentColor"/><rect x="959.0" y="613.0" width="16" height="9" stroke="none" fill="currentColor"/><rect x="1048.0" y="648.0" width="16" height="9" stroke="none" fill="currentColor"/><rect x="667.3" y="685.0" width="16" height="9" stroke="none" fill="currentColor"/><rect x="1024.0" y="692.6" width="16" height="9" stroke="none" fill="currentColor"/><rect x="741.3" y="752.3" width="16" height="9" stroke="none" fill="currentColor"/><rect x="799.0" y="752.3" width="16" height="9" stroke="none" fill="currentColor"/><rect x="774.7" y="762.0" width="16" height="9" stroke="none" fill="currentColor"/></g></g></svg></div>
<svg class="a" style="left:480px;top:437px" width="29" height="27" viewBox="0 0 29 27"><path d="M26 13.5 H4 M13 4 L3.5 13.5 L13 23" fill="none" stroke="#cdd1d4" stroke-width="3.8" stroke-linecap="round" stroke-linejoin="round"/></svg>
<svg class="a" style="left:1243px;top:437px" width="29" height="27" viewBox="0 0 29 27"><path d="M3 13.5 H25 M16 4 L25.5 13.5 L16 23" fill="none" stroke="#cdd1d4" stroke-width="3.8" stroke-linecap="round" stroke-linejoin="round"/></svg>

<!-- modal -->
<div class="a modal" id="modal"></div>
<svg class="a" style="left:528px;top:59px" width="700" height="757" viewBox="528 59 700 757"><use href="#fig"/></svg>
<div class="lb" style="left:867px;top:134.2px">14: upper handlebar</div>
<div class="lb" style="left:978px;top:198px">12: upper handles</div>
<div class="lb" style="left:860.6px;top:212.7px">11: operation section</div>
<div class="lb" style="left:1088px;top:213.8px">15: lower handlebar</div>
<div class="lb" style="left:1089.7px;top:321px">13: lower handles</div>
<div class="lb" style="left:875.8px;top:387px">10: frame</div>
<div class="lb" style="left:1043.7px;top:398.5px">10A: upper frame section</div>
<div class="lb" style="left:807.6px;top:437.4px">54: shooter cap</div>
<div class="lb" style="left:813.4px;top:486.5px">50: snow-throwing mechanism</div>
<div class="lb" style="left:715px;top:524.8px">53: shooter</div>
<div class="lb" style="left:871.5px;top:520.5px">30: driving means</div>
<div class="lb" style="left:851.2px;top:550px">31: electric motor</div>
<div class="lb" style="left:886.7px;top:553px">10B: lower frame section</div>
<div class="lb" style="left:714px;top:564px">51: blower casing</div>
<div class="lb" style="left:832.7px;top:578px">32: worm gear speed reducer</div>
<div class="lb" style="left:649px;top:608px">40: snow-bank cutting section</div>
<div class="lb" style="left:956px;top:608px">16: fulcrum</div>
<div class="lb" style="left:1045px;top:643px">20: on-snow moving means</div>
<div class="lb" style="left:664.3px;top:680px">41: auger</div>
<div class="lb" style="left:1021px;top:687.6px">21: sliders</div>
<div class="lb" style="left:738.3px;top:747.3px">34: worm gear speed reducers</div>
<div class="lb" style="left:796px;top:747.3px">33: drive shaft</div>
<div class="lb" style="left:771.7px;top:757px">42: auger cover</div>

<!-- toolbar -->
<div class="a" style="left:930px;top:33px;font-size:12.5px;line-height:15px;font-weight:700;color:#ececec">PART NAMES:</div>
<div class="a" style="left:1027px;top:29px;width:161px;height:23px;background:#fff;border-radius:2px;font-size:13px;color:#333;line-height:23px">
<span style="position:absolute;left:0;width:39px;text-align:center">OFF</span>
<span style="position:absolute;left:39px;top:0;width:1px;height:23px;background:#ddd"></span>
<span style="position:absolute;left:40px;width:84px;text-align:center">ON-HOVER</span>
<span style="position:absolute;left:124px;top:0;width:37px;height:23px;background:#a7e8e1;text-align:center;border-radius:0 2px 2px 0">ALL</span>
</div>
<svg class="a" style="left:1205px;top:31px" width="22" height="22" viewBox="0 0 22 22"><path d="M15.8 5.9 A7 7 0 1 0 16.1 14.4" fill="none" stroke="#e6e6e6" stroke-width="3"/><path d="M11.5 7.8 L19.6 1.2 L19.6 8.8 Z" fill="#e6e6e6"/></svg>
<svg class="a" style="left:1235px;top:33px" width="17" height="17" viewBox="0 0 17 17"><path d="M2.7 2.8 L14.7 14.4 M14.7 2.8 L2.7 14.4" fill="none" stroke="#e6e6e6" stroke-width="3.8"/></svg>

<!-- list -->
<div class="a list"><div class="in"><p>1: lower handlebar</p><p>10B: lower frame section</p><p>10A: upper frame section</p><p>10: frame</p><p>11: operation section</p><p>12: upper handles</p><p>13: lower handles</p><p>14: upper handlebar</p><p>15: lower handlebar</p><p>16: fulcrum</p><p>17: connection member</p><p>20: on-snow moving means</p><p>21: sliders</p><p>22: wheel</p><p>30: driving means</p><p>31: electric motor</p><p>32: worm gear speed reducer</p><p>33: drive shaft</p><p>34: worm gear speed reducers</p><p>35A: switch</p><p>35B: switch</p><p>36: worm gear speed reducers</p><p>40: snow-bank cutting section</p><p>41: auger</p><p>42: auger cover</p><p>43: back cover section</p><p>44: back cover section</p><p>46: main auger</p><p>47: auger</p><p>50: snow-throwing mechanism</p><p>51: blower casing</p><p>52: blower</p><p>53: shooter</p><p>54: shooter cap</p><p>60: tilting mechanism</p><p>61: tilt-adjusting table</p><p>62: elongated hole</p><p>63: crank</p><p>64: slide pin</p><p>65: fixed pin</p><p>66: thrust bearing</p><p>68: revolution handle</p><p>69: fixing nut</p><p>70: rotation handle</p></div><div class="sb"><div class="sbt"></div></div></div>
</body></html>
